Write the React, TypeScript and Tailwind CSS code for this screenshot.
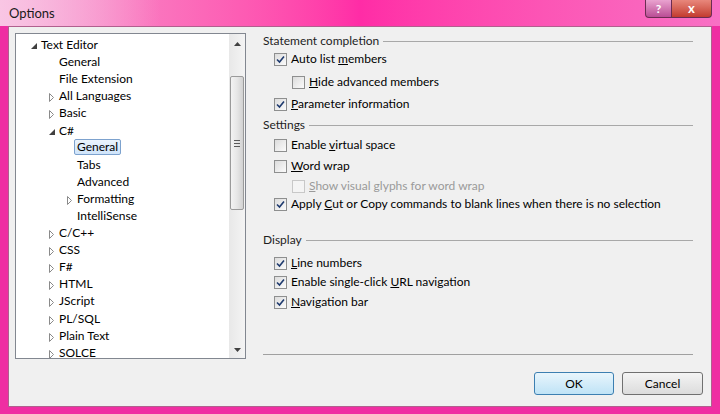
import type { ReactNode } from 'react';

type TreeItem = { label: string; level: number; expander?: 'open' | 'closed'; selected?: boolean };

const treeItems: TreeItem[] = [
  { label: 'Text Editor', level: 0, expander: 'open' },
  { label: 'General', level: 1 },
  { label: 'File Extension', level: 1 },
  { label: 'All Languages', level: 1, expander: 'closed' },
  { label: 'Basic', level: 1, expander: 'closed' },
  { label: 'C#', level: 1, expander: 'open' },
  { label: 'General', level: 2, selected: true },
  { label: 'Tabs', level: 2 },
  { label: 'Advanced', level: 2 },
  { label: 'Formatting', level: 2, expander: 'closed' },
  { label: 'IntelliSense', level: 2 },
  { label: 'C/C++', level: 1, expander: 'closed' },
  { label: 'CSS', level: 1, expander: 'closed' },
  { label: 'F#', level: 1, expander: 'closed' },
  { label: 'HTML', level: 1, expander: 'closed' },
  { label: 'JScript', level: 1, expander: 'closed' },
  { label: 'PL/SQL', level: 1, expander: 'closed' },
  { label: 'Plain Text', level: 1, expander: 'closed' },
  { label: 'SOLCE', level: 1, expander: 'closed' },
];

const indent = ['pl-[25px]', 'pl-[43px]', 'pl-[61px]'];

function Expander({ kind }: { kind: 'open' | 'closed' }) {
  if (kind === 'open') {
    return (
      <svg width="6" height="6" viewBox="0 0 6 6" className="absolute -left-[10px] top-[6px]">
        <path d="M6 0 L6 6 L0 6 Z" fill="#404040" />
      </svg>
    );
  }
  return (
    <svg width="5" height="9" viewBox="0 0 5 9" className="absolute -left-[10px] top-[5px]">
      <path d="M0.5 0.5 L4.5 4.5 L0.5 8.5 Z" fill="none" stroke="#8a8a8a" strokeWidth="1" />
    </svg>
  );
}

function Tree() {
  return (
    <div className="relative w-[231px] h-[326px] bg-white border border-[#828790] overflow-hidden">
      <div className="pt-[2px]">
        {treeItems.map((it, i) => (
          <div key={i} className={`h-[17.1px] flex items-center ${indent[it.level]}`}>
            <div className="relative">
              {it.expander && <Expander kind={it.expander} />}
              <span
                className={
                  it.selected
                    ? '-ml-[3px] px-[2px] border border-[#7da2ce] rounded-[2px] bg-gradient-to-b from-[#ebf4fd] to-[#cfe4fa] leading-[14px] block'
                    : 'block leading-[15px]'
                }
              >
                {it.label}
              </span>
            </div>
          </div>
        ))}
      </div>
      {/* scrollbar */}
      <div className="absolute right-0 top-0 bottom-0 w-[16px] bg-gradient-to-r from-[#e8e8e8] to-[#f4f4f4] flex flex-col items-center">
        <svg width="7" height="4" viewBox="0 0 7 4" className="mt-[8px]">
          <path d="M0 4 L3.5 0 L7 4 Z" fill="#404040" />
        </svg>
        <div className="mt-[30px] w-[14px] h-[134px] rounded-[2px] border border-[#9a9a9a] bg-gradient-to-r from-[#f3f3f3] via-[#e6e6e6] to-[#d2d2d2] flex flex-col items-center justify-center gap-[2px]">
          <div className="w-[6px] h-px bg-[#5a5a5a]" />
          <div className="w-[6px] h-px bg-[#5a5a5a]" />
          <div className="w-[6px] h-px bg-[#5a5a5a]" />
        </div>
        <div className="flex-1" />
        <svg width="7" height="4" viewBox="0 0 7 4" className="mb-[6px]">
          <path d="M0 0 L3.5 4 L7 0 Z" fill="#404040" />
        </svg>
      </div>
    </div>
  );
}

function Checkbox({ checked, disabled }: { checked?: boolean; disabled?: boolean }) {
  return (
    <div
      className={`w-[13px] h-[13px] border flex items-center justify-center shrink-0 ${
        disabled ? 'border-[#c8c8c8] bg-[#f4f4f4]' : 'border-[#8e8f8f] bg-gradient-to-br from-[#dcdcdc] to-[#fbfbfb]'
      }`}
    >
      {checked && (
        <svg width="9" height="9" viewBox="0 0 9 9">
          <path d="M1 4.5 L3.5 7 L8 1.5" fill="none" stroke="#1e3a6e" strokeWidth="1.6" />
        </svg>
      )}
    </div>
  );
}

function Header({ title, className }: { title: string; className: string }) {
  return (
    <div className={`h-4 flex items-center gap-1 ${className}`}>
      <span className="text-[#1e1e1e]">{title}</span>
      <div className="flex-1 h-px bg-[#a8a8a8]" />
    </div>
  );
}

function Option({
  children,
  checked,
  disabled,
  indent2,
  className,
}: {
  children: ReactNode;
  checked?: boolean;
  disabled?: boolean;
  indent2?: boolean;
  className: string;
}) {
  return (
    <div className={`h-4 flex items-center gap-[4px] ${indent2 ? 'pl-[29px]' : 'pl-[11px]'} ${className}`}>
      <Checkbox checked={checked} disabled={disabled} />
      <span className={disabled ? 'text-[#9a9a9a]' : 'text-black'}>{children}</span>
    </div>
  );
}

export default function App() {
  return (
    <div
      className="w-[720px] h-[414px] overflow-hidden flex flex-col text-[12px] bg-[#ef2ea2]"
      style={{ fontFamily: 'Lato, "Noto Sans", sans-serif' }}
    >
      {/* title bar */}
      <div className="relative h-[26px] shrink-0 bg-gradient-to-r from-[#f39ad0] via-[#ff2ca6] to-[#f870c4]">
        <div className="absolute left-0 top-0 w-[160px] h-[26px] bg-gradient-to-r from-[#f9c6e4] to-transparent" />
        <span className="absolute left-[9px] top-[4px] text-[13px] text-[#1a1a1a]">Options</span>
        <div className="absolute right-[8px] top-0 flex">
          <div className="w-[27px] h-[18px] border border-[#6b2c52] border-t-0 rounded-bl-[4px] bg-gradient-to-b from-[#e9a2cf] to-[#b94c95] flex items-center justify-center text-white font-bold text-[12px]">
            ?
          </div>
          <div className="w-[40px] h-[18px] border border-[#6b2c52] border-t-0 border-l-0 rounded-br-[4px] bg-gradient-to-b from-[#e8877c] to-[#c23a2e] flex items-center justify-center text-white font-bold text-[13px]">
            x
          </div>
        </div>
      </div>
      {/* client */}
      <div className="mx-[8px] mb-[7px] flex-1 bg-[#f0f0f0] border border-[#b0608e] flex flex-col">
        <div className="flex h-[331px]">
          <div className="pl-[6px] pt-[6px]">
            <Tree />
          </div>
          <div className="ml-[17px] w-[430px] flex flex-col">
            <Header title="Statement completion" className="mt-[6px]" />
            <Option checked className="mt-[2px]">
              Auto list <u>m</u>embers
            </Option>
            <Option indent2 className="mt-[7px]">
              <u>H</u>ide advanced members
            </Option>
            <Option checked className="mt-[6px]">
              <u>P</u>arameter information
            </Option>
            <Header title="Settings" className="mt-[5px]" />
            <Option className="mt-[4px]">
              Enable <u>v</u>irtual space
            </Option>
            <Option className="mt-[5px]">
              <u>W</u>ord wrap
            </Option>
            <Option indent2 disabled className="mt-[4px]">
              <u>S</u>how visual glyphs for word wrap
            </Option>
            <Option checked className="mt-[2px]">
              Apply <u>C</u>ut or Copy commands to blank lines when there is no selection
            </Option>
            <Header title="Display" className="mt-[20px]" />
            <Option checked className="mt-[7px]">
              <u>L</u>ine numbers
            </Option>
            <Option checked className="mt-[3px]">
              Enable single-click <u>U</u>RL navigation
            </Option>
            <Option checked className="mt-[4px]">
              <u>N</u>avigation bar
            </Option>
            <div className="flex-1" />
            <div className="h-px bg-[#a0a0a0] mb-[3px]" />
          </div>
        </div>
        <div className="flex justify-end gap-[8px] pr-[8px] mt-[14px]">
          <button className="w-[80px] h-[23px] rounded-[3px] border border-[#3c7fb1] bg-gradient-to-b from-[#e8f5fc] to-[#bfe3f6] text-black text-[12px]">
            OK
          </button>
          <button className="w-[81px] h-[23px] rounded-[3px] border border-[#707070] bg-gradient-to-b from-[#f4f4f4] to-[#dcdcdc] text-black text-[12px]">
            Cancel
          </button>
        </div>
      </div>
    </div>
  );
}
